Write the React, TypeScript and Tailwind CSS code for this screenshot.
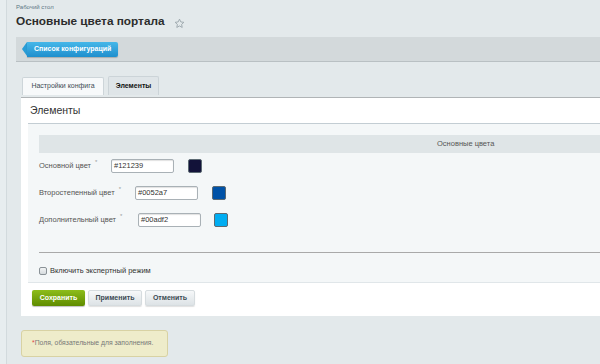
import React from "react";

const F = { fontFamily: '"Liberation Sans", Arial, sans-serif' };

function Star() {
  return (
    <svg width="11" height="11" viewBox="0 0 24 24" fill="none" stroke="#9aa5ab" strokeWidth="2" strokeLinejoin="round">
      <path d="M12 2.5l2.9 6.1 6.6.8-4.9 4.6 1.3 6.6L12 17.3l-5.9 3.3 1.3-6.6-4.9-4.6 6.6-.8z" />
    </svg>
  );
}

function Row({ label, value, color, inputX, swatchGap }: { label: string; value: string; color: string; inputX: string; swatchGap: string }) {
  return (
    <div className="flex items-center h-[14px]">
      <div className={`${inputX} text-[7.5px] text-[#555] flex items-start`}>
        <span>{label}</span>
        <span className="text-[6px] text-[#999] ml-[4px] -mt-[2px]">*</span>
      </div>
      <div className="w-[63px] h-[14px] bg-white border border-[#a9b1b6] rounded-[2px] shadow-[inset_0_1px_1px_rgba(0,0,0,0.12)] text-[7.5px] text-[#333] pl-[2px] flex items-center">
        {value}
      </div>
      <div className={`${swatchGap} w-[14px] h-[14px] border border-[#5c6a73] rounded-[2px]`} style={{ background: color }} />
    </div>
  );
}

export default function App() {
  return (
    <div className="w-[600px] h-[364px] bg-[#e3e9eb] flex overflow-hidden" style={F}>
      <div className="w-[7px] h-full bg-[#e7edef] border-r border-[#d2dadd] shrink-0" />
      <div className="flex-1 pl-[9px] flex flex-col">
        <div className="text-[6px] text-[#5d7685] pt-[3px] h-[10px] leading-[8px]">Рабочий стол</div>
        <div className="flex items-center h-[22px] mt-[1px]">
          <span className="text-[11.8px] font-bold text-[#2c2c2c]">Основные цвета портала</span>
          <span className="ml-[9px] mt-[2px]"><Star /></span>
        </div>
        <div className="mt-[4px] h-[25px] bg-[#d3d9db] border-b border-[#b9c0c3] flex items-center pl-[6px]">
          <div className="relative h-[15px] flex items-center">
            <div className="w-0 h-0 border-y-[7.5px] border-y-transparent border-r-[5px] border-r-[#2a9dd6]" />
            <div className="h-[15px] px-[7px] flex items-center rounded-r-[2px] bg-gradient-to-b from-[#45b7e9] to-[#1e8fcd] text-white text-[7px] font-bold shadow-[0_1px_1px_rgba(0,0,0,0.2)]">
              Список конфигураций
            </div>
          </div>
        </div>
        <div className="mt-[14px] ml-[6px] flex gap-[4px] h-[19px] items-end">
          <div className="h-[18px] w-[82px] bg-[#f7f9fa] border border-[#cdd5d9] border-b-0 rounded-t-[2px] flex items-center justify-center text-[7px] text-[#3d4c55]">
            Настройки конфига
          </div>
          <div className="h-[19px] w-[51px] bg-[#dfe5e8] border border-[#ccd4d8] border-b-0 rounded-t-[2px] flex items-center justify-center text-[7px] text-[#111] font-semibold">
            Элементы
          </div>
        </div>
        <div className="ml-[5px] mt-[2px] bg-white border-t border-[#b0b4b6] h-[219px] flex flex-col">
          <div className="h-[25px] pl-[9px] flex items-center text-[10.5px] text-[#333]">Элементы</div>
          <div className="ml-[7px] bg-[#f4f7f8] border-t border-[#c3cdd3] border-b border-b-[#e0e6e9] h-[160px] flex flex-col">
            <div className="mt-[11px] ml-[11px] h-[18px] bg-[#dfe5e7] flex items-center text-[7.5px] text-[#555] pl-[398px]">
              Основные цвета
            </div>
            <div className="ml-[11px] mt-[6px] flex flex-col gap-[13px]">
              <Row label="Основной цвет" value="#121239" color="#121239" inputX="w-[72px]" swatchGap="ml-[14px]" />
              <Row label="Второстепенный цвет" value="#0052a7" color="#0052a7" inputX="w-[96px]" swatchGap="ml-[14px]" />
              <Row label="Дополнительный цвет" value="#00adf2" color="#00adf2" inputX="w-[99px]" swatchGap="ml-[13px]" />
            </div>
            <div className="ml-[11px] mt-[25px] h-[1px] bg-[#a9a9a9]" />
            <div className="ml-[11px] mt-[12px] flex items-center gap-[3px]">
              <div className="w-[8px] h-[8px] rounded-[2px] border border-[#8a9297] bg-gradient-to-b from-[#f2f4f5] to-[#d6dbde]" />
              <span className="text-[7.5px] text-[#333]">Включить экспертный режим</span>
            </div>
          </div>
          <div className="ml-[11px] mt-[7px] flex gap-[3px]">
            <div className="w-[53px] h-[16px] rounded-[2px] bg-gradient-to-b from-[#8dbd1a] to-[#5f8c00] text-white text-[7px] font-bold flex items-center justify-center shadow-[0_1px_1px_rgba(0,0,0,0.25)]">
              Сохранить
            </div>
            <div className="w-[54px] h-[16px] rounded-[2px] bg-gradient-to-b from-[#f6f8f9] to-[#dde3e6] border border-[#d6dcdf] text-[#3b4a53] text-[7px] font-bold flex items-center justify-center shadow-[0_1px_1px_rgba(0,0,0,0.12)]">
              Применить
            </div>
            <div className="w-[50px] h-[16px] rounded-[2px] bg-gradient-to-b from-[#f6f8f9] to-[#dde3e6] border border-[#d6dcdf] text-[#3b4a53] text-[7px] font-bold flex items-center justify-center shadow-[0_1px_1px_rgba(0,0,0,0.12)]">
              Отменить
            </div>
          </div>
        </div>
        <div className="ml-[5px] mt-[14px] w-[147px] h-[27px] bg-[#eeecca] border border-[#d8d2a3] rounded-[3px] flex items-center pl-[10px] text-[6.8px] text-[#777]">
          <span className="text-[#e04545]">*</span>Поля, обязательные для заполнения.
        </div>
      </div>
    </div>
  );
}
